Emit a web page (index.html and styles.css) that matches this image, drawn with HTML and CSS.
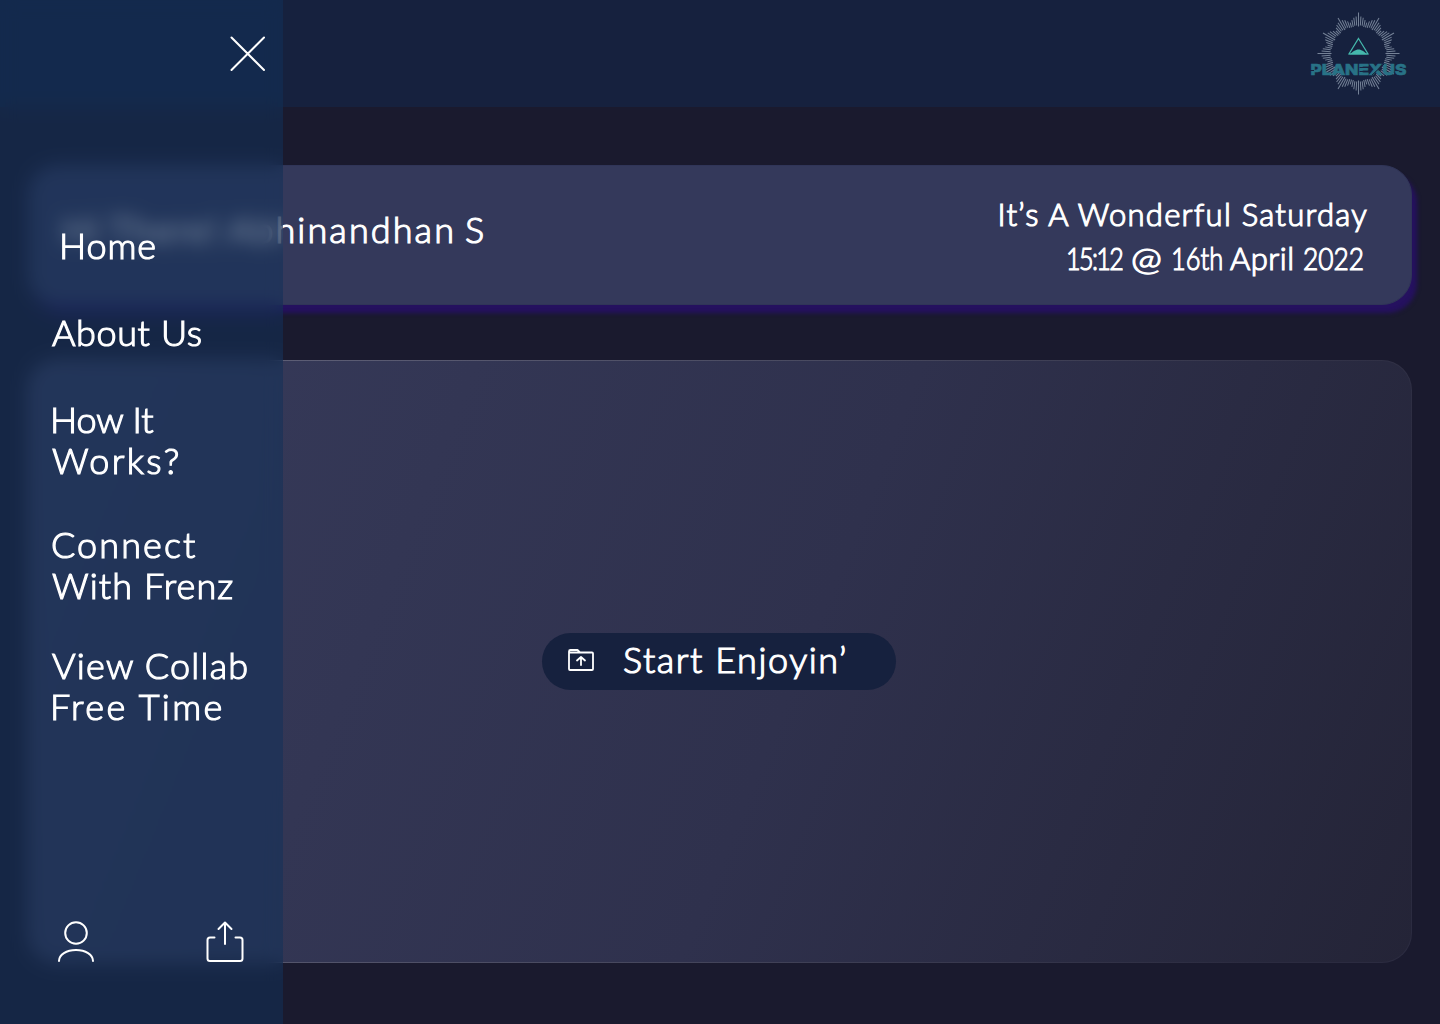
FILE: index.html
```
<!DOCTYPE html>
<html lang="en">
<head>
<meta charset="utf-8">
<title>Planexus</title>
<link rel="stylesheet" href="styles.css">
</head>
<body>
<div class="page">
  <header class="topbar">
    <svg class="logo" viewBox="0 0 100 86" width="100" height="86" role="img" aria-label="Planexus">
      <defs>
        <g id="rays">
          <path d="M0-41V-27"/>
          <path d="M0-37V-28" transform="rotate(3.75)"/>
          <path d="M0-36V-28" transform="rotate(7.5)"/>
          <path d="M0-34V-27" transform="rotate(11.25)"/>
          <path d="M0-32V-27" transform="rotate(15)"/>
          <path d="M0-34V-27" transform="rotate(18.75)"/>
          <path d="M0-36V-28" transform="rotate(22.5)"/>
          <path d="M0-37V-28" transform="rotate(26.25)"/>
        </g>
      </defs>
      <g class="burst" transform="translate(49.500 43.500)">
        <use href="#rays"/>
        <use href="#rays" transform="rotate(30)"/>
        <use href="#rays" transform="rotate(60)"/>
        <use href="#rays" transform="rotate(90)"/>
        <use href="#rays" transform="rotate(120)"/>
        <use href="#rays" transform="rotate(150)"/>
        <use href="#rays" transform="rotate(180)"/>
        <use href="#rays" transform="rotate(210)"/>
        <use href="#rays" transform="rotate(240)"/>
        <use href="#rays" transform="rotate(270)"/>
        <use href="#rays" transform="rotate(300)"/>
        <use href="#rays" transform="rotate(330)"/>
      </g>
      <path class="peak-line" d="M49.500 28.500L59 44H40z"/>
      <path class="peak-fill" d="M40 44.500C44 42 46 39.500 49.500 39.500S55 42 59 44.500z"/>
      <text class="wordmark" x="1.500" y="65" textLength="96" lengthAdjust="spacingAndGlyphs">PLANEXUS</text>
      <path class="stencil" d="M1 60.500H5M50.500 57.500H61M50.500 61.500H61M63 65L75 54"/>
    </svg>
  </header>

  <main class="content">
    <section class="welcome">
      <p class="greeting">Hi There! Abhinandhan S</p>
      <div class="today">
        <p class="day">It’s A Wonderful Saturday</p>
        <p class="date"><span class="time">15:12</span> <span class="at">@</span> <span class="nth">16th</span> <span class="month">April</span> <span class="year">2022</span></p>
      </div>
    </section>
    <section class="stage">
      <button class="start" type="button">
        <svg width="28" height="24" viewBox="0 0 28 24" fill="none" stroke="#fff" stroke-width="1.800" stroke-linejoin="round" stroke-linecap="round"><path d="M2 3.500V21a1 1 0 0 0 1 1H25a1 1 0 0 0 1-1V5.500a1 1 0 0 0-1-1H13L10.500 2H3.500A1.500 1.500 0 0 0 2 3.500V4.500H13"/><path d="M14 17V9.500M10 12.500L14 9l4 3.500"/></svg>
        <span>Start Enjoyin’</span>
      </button>
    </section>
  </main>

  <aside class="drawer">
    <button class="close" type="button" aria-label="Close menu">
      <svg width="36" height="36" viewBox="0 0 36 36" fill="none" stroke="#fff" stroke-width="2" stroke-linecap="round"><path d="M1.500 1.500L34 34M34 1.500L1.500 34"/></svg>
    </button>
    <nav class="menu">
      <a class="home">Home</a>
      <a class="about">About Us</a>
      <a class="how"><span class="how-a">How It</span><span class="how-b">Works?</span></a>
      <a class="connect"><span class="connect-a">Connect</span><span class="connect-b">With Frenz</span></a>
      <a class="collab"><span class="collab-a">View Collab</span><span class="collab-b">Free Time</span></a>
    </nav>
    <div class="tools">
      <svg width="38" height="42" viewBox="0 0 38 42" fill="none" stroke="#fff" stroke-width="2" stroke-linecap="round"><circle cx="19" cy="12" r="10.800"/><path d="M2 40C2 33.500 9.500 29 19 29s17 4.500 17 11"/></svg>
      <svg width="38" height="42" viewBox="0 0 38 42" fill="none" stroke="#fff" stroke-width="2" stroke-linecap="round" stroke-linejoin="round"><path d="M8.500 16.500H4a2.500 2.500 0 0 0-2.500 2.500V37.500A2.500 2.500 0 0 0 4 40H34a2.500 2.500 0 0 0 2.500-2.500V19A2.500 2.500 0 0 0 34 16.500H29.500M19 23V1.500M12.500 8L19 1.500 25.500 8"/></svg>
    </div>
  </aside>
</div>
</body>
</html>
```
FILE: styles.css
```
* { box-sizing: border-box; }
body { margin: 0; background: #1a1a2e; }
p { margin: 0; }
button { border: 0; padding: 0; background: none; color: inherit; font: inherit; }
svg { display: block; flex: none; }

.page {
  position: relative;
  height: 1024px;
  overflow: hidden;
  color: #fff;
  font-family: Lato, sans-serif;
  font-weight: 300;
  font-size: 36px;
  line-height: 41px;
  white-space: nowrap;
  -webkit-text-stroke: 1.200px #fff;
}

.topbar {
  display: flex;
  justify-content: flex-end;
  height: 107px;
  padding: 10px 31px 0 0;
  background: #16213e;
}
.burst { stroke: #8d9bae; stroke-width: 1; opacity: .8; }
.peak-line { fill: none; stroke: #45b8ac; stroke-width: 1.200; }
.peak-fill { fill: #45b8ac; }
.wordmark { font: 800 15px Inter, sans-serif; fill: #287286; stroke: #287286; stroke-width: .6; -webkit-text-stroke: .6px #287286; }
.stencil { fill: none; stroke: #16213e; stroke-width: 1; }

.content {
  display: flex;
  flex-direction: column;
  gap: 55px;
  padding: 58px 28px 0;
}
.welcome {
  display: flex;
  justify-content: space-between;
  height: 140px;
  padding: 43px 45px 0 33px;
  border: 1px solid #303558;
  border-radius: 30px;
  background: #34395b;
  box-shadow: 5px 8px 4px #25115f;
}
.greeting { letter-spacing: 2.100px; word-spacing: -3px; }
.today {
  display: flex;
  flex-direction: column;
  align-items: flex-end;
  margin-top: -17px;
  font-size: 31px;
  line-height: 44px;
}
.day { margin-right: -2px; letter-spacing: 1.250px; }
.date { display: flex; gap: 8px; margin-right: 2px; }
.date span { transform-origin: 0 50%; }
.time { width: 57px; transform: scaleX(.81); letter-spacing: -2px; }
.at { width: 32px; transform: scaleX(1.200); }
.nth { width: 51px; transform: scaleX(.82); }
.month { width: 65px; letter-spacing: .500px; }
.year { width: 61px; transform: scaleX(.850); }

.stage {
  display: flex;
  align-items: center;
  justify-content: center;
  height: 603px;
  padding-right: 2px;
  border: 1px solid transparent;
  border-radius: 30px;
  background:
    linear-gradient(112deg, #373b5b 0%, #2f314d 55%, #242437 100%) padding-box,
    linear-gradient(112deg, #66677f 0%, #48495f 50%, #2b2b40 90%) border-box;
}
.start {
  display: flex;
  align-items: center;
  gap: 28px;
  width: 354px;
  height: 57px;
  padding: 0 0 3px 25px;
  border-radius: 29px;
  background: #16213e;
  letter-spacing: 1.550px;
}
.start span { margin-top: -2px; }

.drawer {
  position: absolute;
  inset: 0 auto 0 0;
  display: flex;
  flex-direction: column;
  width: 283px;
  padding-top: 36px;
  background: rgba(18, 49, 89, .55);
  backdrop-filter: blur(9px);
}
.close { align-self: flex-end; margin-right: 17px; }
.menu {
  display: flex;
  flex-direction: column;
  gap: 46px;
  padding: 153px 0 0 51px;
}
.menu a, .menu span { display: block; }
.home { padding-left: 8px; letter-spacing: .900px; }
.about { padding-left: 1px; letter-spacing: .600px; }
.how, .connect { margin-left: -1px; }
.connect { margin-top: -3px; }
.collab { margin-top: -7px; margin-left: -1px; }
.how-a { letter-spacing: -.100px; }
.how-b { padding-left: 2px; letter-spacing: 2.400px; }
.connect-a { padding-left: 1px; letter-spacing: 2.100px; }
.connect-b { padding-left: 2px; letter-spacing: 1.100px; }
.collab-a { padding-left: 2px; letter-spacing: 1.200px; }
.collab-b { letter-spacing: 2.400px; }
.tools {
  display: flex;
  justify-content: space-between;
  margin-top: auto;
  padding: 0 39px 61px 57px;
}
```
